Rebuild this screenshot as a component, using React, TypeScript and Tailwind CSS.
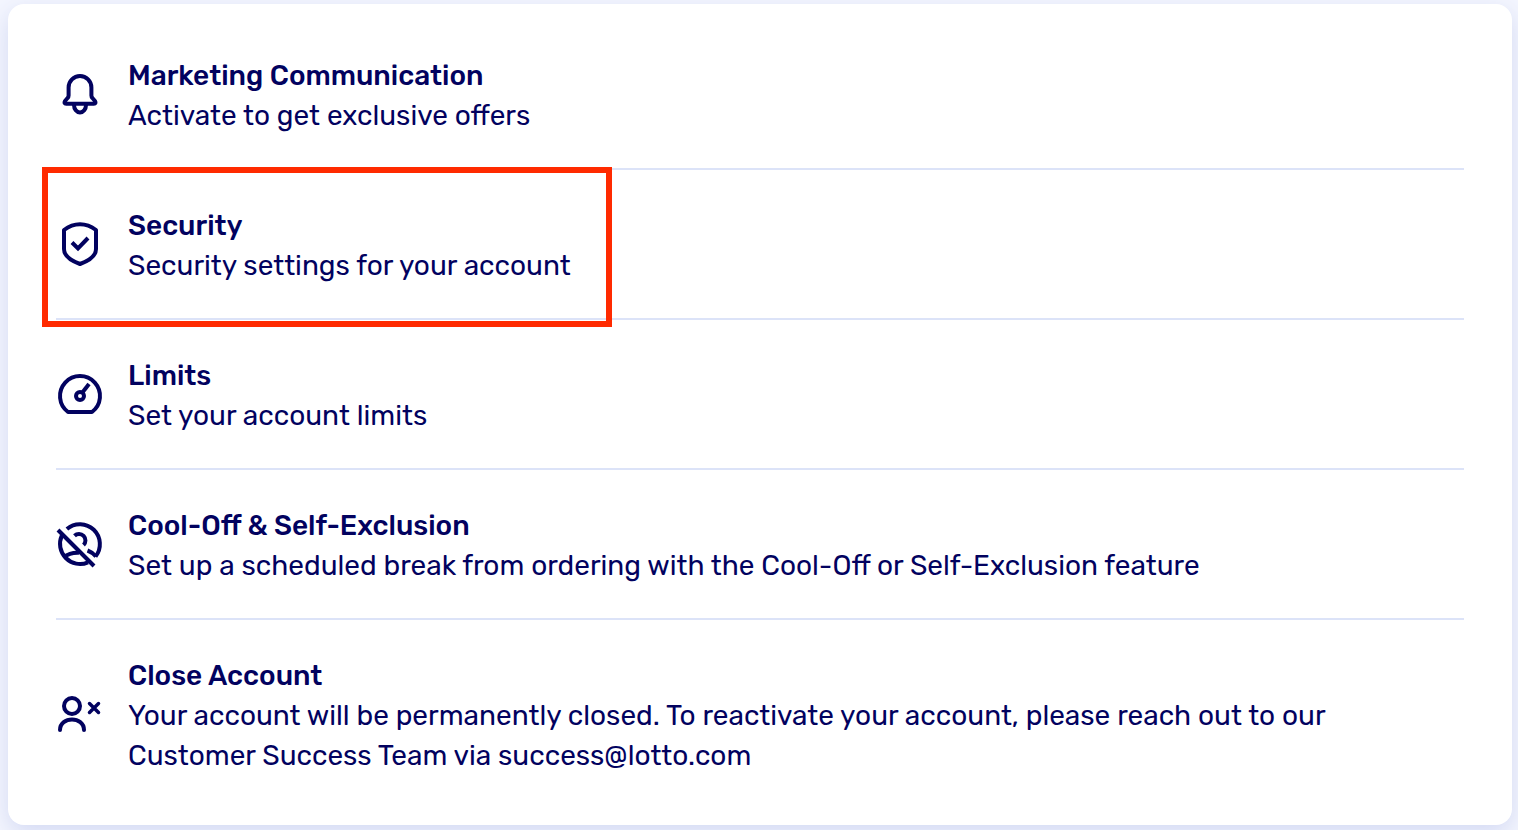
import type { ReactNode } from "react";

type Setting = {
  id: string;
  title: string;
  description: string;
  icon: ReactNode;
  highlighted?: boolean;
};

const SETTINGS: Setting[] = [
  {
    id: "marketing",
    title: "Marketing Communication",
    description: "Activate to get exclusive offers",
    icon: (
      <>
        <path d="M12.6 17.4a11.4 11.4 0 0 1 22.8 0V25.500q0 1.500 1 2.500l2.600 3q1.500 2.700-1.200 2.700H10.200q-2.700 0-1.200-2.700l2.600-3q1-1 1-2.500z" />
        <path d="M18 35a6 7.500 0 0 0 12 0" />
      </>
    ),
  },
  {
    id: "security",
    title: "Security",
    description: "Security settings for your account",
    highlighted: true,
    icon: (
      <>
        <path d="M8 10C18 2.300 30 2.300 40 10V29c0 6-5 11-16 15C13 40 8 35 8 29z" />
        <path strokeLinejoin="miter" d="M16 22.500l6 6L32 18" />
      </>
    ),
  },
  {
    id: "limits",
    title: "Limits",
    description: "Set your account limits",
    icon: (
      <>
        <path d="M12 42a20 20 0 1 1 24 0z" />
        <circle cx="24" cy="26" r="4" />
        <path d="M26 23l7-9" />
      </>
    ),
  },
  {
    id: "cool-off",
    title: "Cool-Off & Self-Exclusion",
    description:
      "Set up a scheduled break from ordering with the Cool-Off or Self-Exclusion feature",
    icon: (
      <>
        <path d="M2 10l36 36" />
        <path d="M10.900 8.900A20 20 0 0 1 39.500 36.600" />
        <path d="M5.800 15.700A20 20 0 0 0 32 42.300" />
        <path d="M18.500 15.800a6 6 0 1 1 9 9.200" />
        <path d="M8 37c4-3.200 9-4.500 15-4.200" />
        <path d="M31.500 30.500q5 1.800 8.500 6" />
      </>
    ),
  },
  {
    id: "close-account",
    title: "Close Account",
    description:
      "Your account will be permanently closed. To reactivate your account, please reach out to our Customer Success Team via success@lotto.com",
    icon: (
      <>
        <circle cx="16" cy="16" r="8" />
        <path strokeLinecap="round" d="M4 40c0-14 24-14 24 0" />
        <path strokeLinecap="round" strokeWidth="3.500" d="M33.500 13.500l9 9M42.500 13.500l-9 9" />
      </>
    ),
  },
];

function SettingRow({ setting }: { setting: Setting }) {
  return (
    <li className="relative border-b-2 border-[#dce3f8] last:border-b-0">
      <a href={`#${setting.id}`} className="flex items-center gap-6 pt-9 pb-8">
        <svg
          className="mb-1 size-12 shrink-0"
          viewBox="0 0 48 48"
          fill="none"
          stroke="currentColor"
          strokeWidth="4"
          strokeLinejoin="round"
          aria-hidden="true"
        >
          {setting.icon}
        </svg>
        <div className="max-w-[1240px] text-[28px] leading-10">
          <h2 className="font-medium">{setting.title}</h2>
          <p>{setting.description}</p>
        </div>
      </a>
      {setting.highlighted && (
        <div className="pointer-events-none absolute -top-[3px] -left-[14px] h-40 w-[570px] border-6 border-[#ff2a00]" />
      )}
    </li>
  );
}

export default function App() {
  return (
    <main className="min-h-screen bg-[#f4f6fe] pt-1 pr-1.5 pl-2 font-['Rubik',Roboto,sans-serif] text-[#02025f]">
      <ul className="rounded-2xl bg-white px-12 pt-4 pb-[17px] shadow-[0_8px_24px_#d3d9f3]">
        {SETTINGS.map((setting) => (
          <SettingRow key={setting.id} setting={setting} />
        ))}
      </ul>
    </main>
  );
}
